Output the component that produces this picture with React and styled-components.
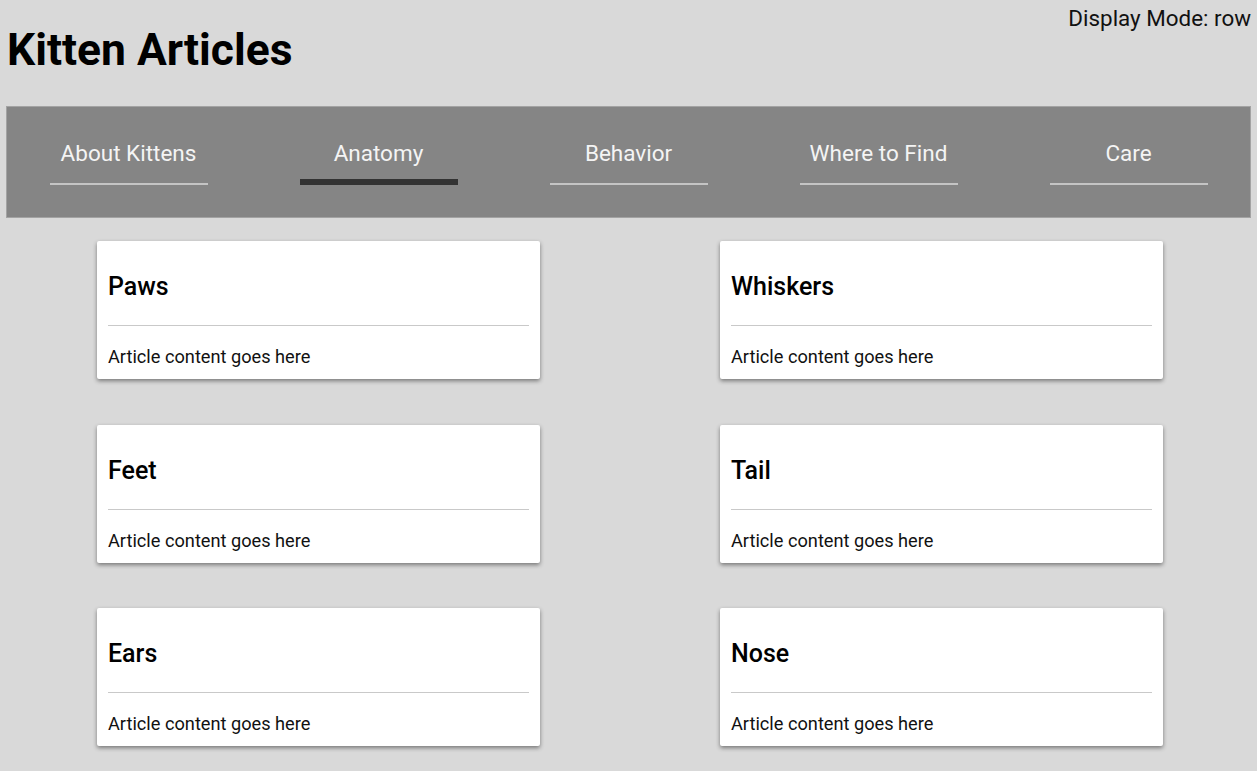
import styled, { createGlobalStyle } from "styled-components"

const GlobalStyle = createGlobalStyle`
    body {
        margin: 0;
        background: #d9d9d9;
        font-family: Roboto, "Liberation Sans", sans-serif;
    }
`

const tabs = ["About Kittens", "Anatomy", "Behavior", "Where to Find", "Care"]
const articles = ["Paws", "Whiskers", "Feet", "Tail", "Ears", "Nose"]

const App = () => {
    return (
        <Page>
            <GlobalStyle />
            <Header>
                <Title>Kitten Articles</Title>
                <Mode>Display Mode: row</Mode>
            </Header>
            <TabBar>
                {tabs.map(t => (
                    <TabCell key={t}>
                        <Tab $active={t === "Anatomy"}>{t}</Tab>
                    </TabCell>
                ))}
            </TabBar>
            <Grid>
                {articles.map(a => (
                    <Card key={a}>
                        <CardTitle>{a}</CardTitle>
                        <CardBody>Article content goes here</CardBody>
                    </Card>
                ))}
            </Grid>
        </Page>
    )
}

const Page = styled.div`
    padding: 5px 6px 25px;
`

const Header = styled.header`
    display: flex;
    justify-content: space-between;
    align-items: flex-start;
`

const Title = styled.h1`
    margin: 19px 0 29px 1px;
    font-size: 44.4px;
    line-height: 53px;
    font-weight: 700;
    color: #000;
`

const Mode = styled.div`
    font-size: 22.4px;
    line-height: 26px;
    color: #111;
`

const TabBar = styled.nav`
    display: grid;
    grid-template-columns: repeat(5, 250px);
    justify-content: center;
    background: #858585;
    border: 1px solid #a3a3a3;
    padding: 34px 0 32px;
`

const TabCell = styled.div`
    display: flex;
    justify-content: center;
`

const Tab = styled.div`
    box-sizing: border-box;
    height: 44px;
    width: 158px;
    text-align: center;
    font-size: 22.5px;
    line-height: 24px;
    color: #f4f4f4;
    border-bottom: ${p => p.$active ? "6px solid #333" : "2px solid #c4c4c4"};
`

const Grid = styled.div`
    display: grid;
    grid-template-columns: 1fr 1fr;
    justify-items: center;
    row-gap: 45.5px;
    margin: 0 -2px 0 1px;
    padding-top: 23px;
`

const Card = styled.article`
    box-sizing: border-box;
    width: 443px;
    height: 138px;
    padding: 32px 11px 0;
    background: #fff;
    border-radius: 2px;
    box-shadow: 0 2px 4px rgba(0, 0, 0, 0.45);
`

const CardTitle = styled.h2`
    margin: 0;
    padding-bottom: 24px;
    border-bottom: 1px solid #c9c9c9;
    font-size: 25px;
    line-height: 28px;
    font-weight: 500;
    color: #000;
`

const CardBody = styled.p`
    margin: 20px 0 0;
    font-size: 18.2px;
    line-height: 21px;
    color: #111;
`

export default App
